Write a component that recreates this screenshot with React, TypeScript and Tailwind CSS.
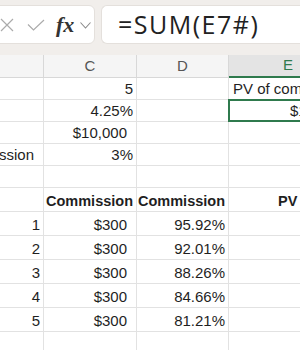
const green = "border-[#2f7a4d]"

type CellProps = {
    w: string
    children?: React.ReactNode
    className?: string
}

const Cell = ({ w, children, className = "" }: CellProps) => (
    <div
        className={`${w} flex shrink-0 items-end overflow-hidden whitespace-nowrap border-b border-r border-[#e2e2e2] pb-[3px] leading-none ${className}`}
    >
        {children}
    </div>
)

const Row = ({ h, cells }: { h: string; cells: React.ReactNode[] }) => (
    <div className={`flex ${h}`}>{cells}</div>
)

const colB = "w-[44px]"
const colC = "w-[93px]"
const colD = "w-[92px]"
const colE = "w-[118px]"

const bottomRows = [
    ["1", "$300", "95.92%"],
    ["2", "$300", "92.01%"],
    ["3", "$300", "88.26%"],
    ["4", "$300", "84.66%"],
    ["5", "$300", "81.21%"],
]

export default function App() {
    return (
        <div className="h-[350px] w-[300px] overflow-hidden bg-white font-['Liberation_Sans',Arial,sans-serif] text-[15px] text-[#1f1f1f]">
            {/* formula bar */}
            <div className="flex h-[55px] gap-[6px] bg-[#f1eeeb] pt-[5px]">
                <div className="-ml-[10px] flex h-[39px] w-[105px] shrink-0 items-center rounded-[6px] border border-[#e4e0dc] bg-white pl-[9px]">
                    <svg width="14" height="14" viewBox="0 0 14 14" className="shrink-0">
                        <path d="M1 1 L13 13 M13 1 L1 13" stroke="#ababab" strokeWidth="1.2" fill="none" />
                    </svg>
                    <svg width="18" height="12" viewBox="0 0 18 12" className="ml-[13px] shrink-0">
                        <path d="M1 5.5 L6.5 11 L17 1" stroke="#ababab" strokeWidth="1.2" fill="none" />
                    </svg>
                    <span className="ml-[11px] font-['Liberation_Serif',serif] text-[22px] font-bold italic leading-none text-[#333]">
                        fx
                    </span>
                    <svg width="11" height="7" viewBox="0 0 11 7" className="ml-[6px] mt-[2px] shrink-0">
                        <path d="M0.5 0.5 L5.5 6 L10.5 0.5" stroke="#8a8a8a" strokeWidth="1.1" fill="none" />
                    </svg>
                </div>
                <div className="flex h-[39px] flex-1 items-center rounded-l-[6px] border border-r-0 border-[#e4e0dc] bg-white pl-[16px]">
                    <span className="font-['Open_Sans',sans-serif] text-[25px] leading-none tracking-[1.5px] text-[#222]">
                        =SUM(E7#)
                    </span>
                </div>
            </div>

            {/* column headers */}
            <div className="flex h-[23px] bg-[#f5f5f5] text-[#555]">
                <div className={`${colB} shrink-0 border-b border-r border-[#d8d8d8]`} />
                <div className={`${colC} flex shrink-0 items-center justify-center border-b border-r border-[#d8d8d8]`}>C</div>
                <div className={`${colD} flex shrink-0 items-center justify-center border-b border-r border-[#d8d8d8]`}>D</div>
                <div className={`${colE} flex shrink-0 items-center justify-center border-b-2 ${green} bg-[#e4e4e4] text-[#2f7a4d]`}>E</div>
            </div>

            <Row
                h="h-[22px]"
                cells={[
                    <Cell key="b" w={colB} />,
                    <Cell key="c" w={colC} className="justify-end pr-[3px]">5</Cell>,
                    <Cell key="d" w={colD} />,
                    <Cell key="e" w={colE} className="pl-[4px]">PV of commission</Cell>,
                ]}
            />
            <Row
                h="h-[22px]"
                cells={[
                    <Cell key="b" w={colB} />,
                    <Cell key="c" w={colC} className="justify-end pr-[3px]">4.25%</Cell>,
                    <Cell key="d" w={colD} />,
                    <div key="e" className={`relative ${colE} flex shrink-0 items-end border-b border-[#e2e2e2] pb-[3px] pl-[61px] leading-none`}>
                        $1,332
                        <div className={`absolute -left-px -top-px h-[23px] w-[130px] border-2 ${green}`} />
                    </div>,
                ]}
            />
            <Row
                h="h-[22px]"
                cells={[
                    <Cell key="b" w={colB} />,
                    <Cell key="c" w={colC} className="justify-end pr-[9px]">$10,000</Cell>,
                    <Cell key="d" w={colD} />,
                    <Cell key="e" w={colE} />,
                ]}
            />
            <Row
                h="h-[22px]"
                cells={[
                    <Cell key="b" w={colB} className="justify-end pr-[9px]">Commission</Cell>,
                    <Cell key="c" w={colC} className="justify-end pr-[3px]">3%</Cell>,
                    <Cell key="d" w={colD} />,
                    <Cell key="e" w={colE} />,
                ]}
            />
            <Row
                h="h-[22px]"
                cells={[
                    <Cell key="b" w={colB} />,
                    <Cell key="c" w={colC} />,
                    <Cell key="d" w={colD} />,
                    <Cell key="e" w={colE} />,
                ]}
            />
            <Row
                h="h-[24px]"
                cells={[
                    <Cell key="b" w={colB} />,
                    <Cell key="c" w={colC} className="justify-end pr-[3px] text-[14.5px] font-bold">Commission</Cell>,
                    <Cell key="d" w={colD} className="justify-end pr-[3px] text-[14.5px] font-bold">Commission</Cell>,
                    <Cell key="e" w={colE} className="pl-[49px] text-[14.5px] font-bold">PV of Commission</Cell>,
                ]}
            />
            {bottomRows.map(([n, amount, pct]) => (
                <Row
                    key={n}
                    h="h-[24px]"
                    cells={[
                        <Cell key="b" w={colB} className="justify-end pr-[3px]">{n}</Cell>,
                        <Cell key="c" w={colC} className="justify-end pr-[9px]">{amount}</Cell>,
                        <Cell key="d" w={colD} className="justify-end pr-[3px]">{pct}</Cell>,
                        <Cell key="e" w={colE} />,
                    ]}
                />
            ))}
            <Row
                h="h-[24px]"
                cells={[
                    <Cell key="b" w={colB} />,
                    <Cell key="c" w={colC} />,
                    <Cell key="d" w={colD} />,
                    <Cell key="e" w={colE} />,
                ]}
            />
        </div>
    )
}
